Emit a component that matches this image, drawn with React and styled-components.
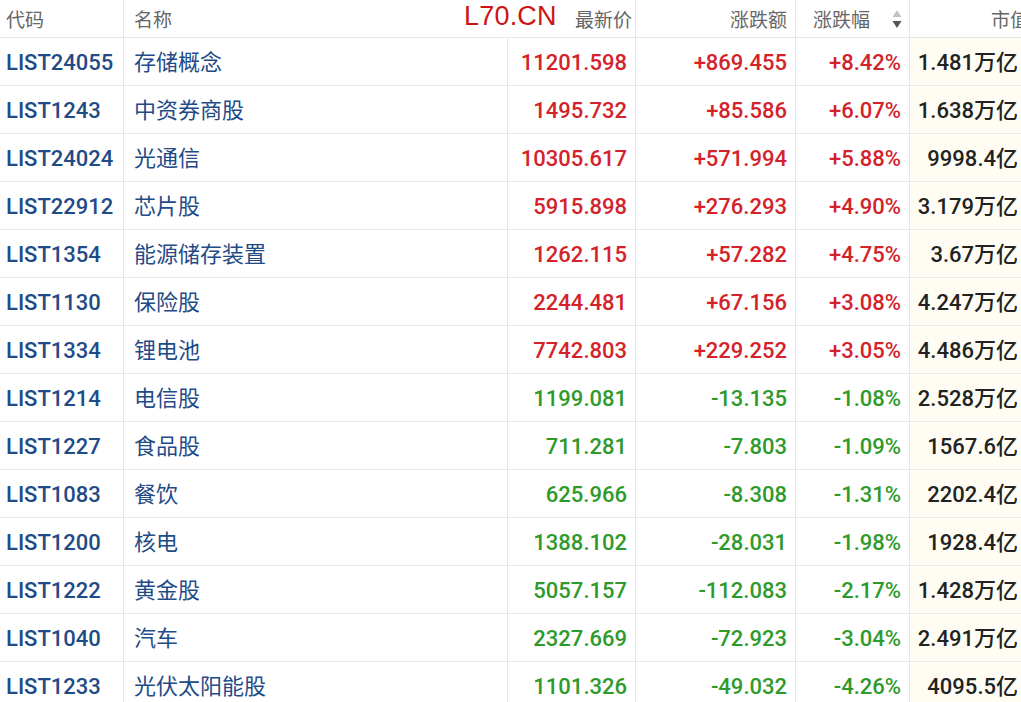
import React from 'react';
import styled, { createGlobalStyle } from 'styled-components';

const rows = [
  ['LIST24055', '存储概念', '11201.598', '+869.455', '+8.42%', '1.481万亿'],
  ['LIST1243', '中资券商股', '1495.732', '+85.586', '+6.07%', '1.638万亿'],
  ['LIST24024', '光通信', '10305.617', '+571.994', '+5.88%', '9998.4亿'],
  ['LIST22912', '芯片股', '5915.898', '+276.293', '+4.90%', '3.179万亿'],
  ['LIST1354', '能源储存装置', '1262.115', '+57.282', '+4.75%', '3.67万亿'],
  ['LIST1130', '保险股', '2244.481', '+67.156', '+3.08%', '4.247万亿'],
  ['LIST1334', '锂电池', '7742.803', '+229.252', '+3.05%', '4.486万亿'],
  ['LIST1214', '电信股', '1199.081', '-13.135', '-1.08%', '2.528万亿'],
  ['LIST1227', '食品股', '711.281', '-7.803', '-1.09%', '1567.6亿'],
  ['LIST1083', '餐饮', '625.966', '-8.308', '-1.31%', '2202.4亿'],
  ['LIST1200', '核电', '1388.102', '-28.031', '-1.98%', '1928.4亿'],
  ['LIST1222', '黄金股', '5057.157', '-112.083', '-2.17%', '1.428万亿'],
  ['LIST1040', '汽车', '2327.669', '-72.923', '-3.04%', '2.491万亿'],
  ['LIST1233', '光伏太阳能股', '1101.326', '-49.032', '-4.26%', '4095.5亿'],
];

const GlobalStyle = createGlobalStyle`
  html, body {
    margin: 0;
    padding: 0;
    background: #fff;
    overflow: hidden;
  }
  body {
    font-family: Roboto, "Noto Sans CJK SC", sans-serif;
  }
  * {
    box-sizing: border-box;
  }
`;

const Page = styled.div`
  position: relative;
  width: 1021px;
  height: 702px;
  overflow: hidden;
`;

const Table = styled.div`
  display: grid;
  grid-template-columns: 124px 384px 128px 160px 114px 120px;
  width: 1030px;
`;

const HeadCell = styled.div`
  height: 38px;
  display: flex;
  align-items: center;
  justify-content: ${p => (p.$left ? 'flex-start' : 'flex-end')};
  gap: 22px;
  padding: ${p => p.$pad || '0 8px'};
  font-family: "Noto Sans CJK SC", sans-serif;
  font-size: 19px;
  color: #666;
  border-bottom: 1px solid #e6e6e6;
  border-right: 1px solid ${p => (p.$noLine ? 'transparent' : '#e6e6e6')};
  white-space: nowrap;
`;

const Cell = styled.div`
  height: 48px;
  display: flex;
  align-items: center;
  justify-content: ${p => (p.$left ? 'flex-start' : 'flex-end')};
  padding: ${p => p.$pad || '2px 8px 0'};
  font-family: ${p => (p.$cjk ? '"Noto Sans CJK SC", sans-serif' : 'Roboto, "Noto Sans CJK SC", sans-serif')};
  font-size: 22px;
  font-weight: ${p => (p.$cjk ? 400 : 500)};
  line-height: 1;
  color: ${p => p.$color};
  background: ${p => p.$bg || '#fff'};
  border-bottom: 1px solid #e8e8e8;
  border-right: 1px solid #e6e6e6;
  white-space: nowrap;
`;

const Watermark = styled.div`
  position: absolute;
  left: 464px;
  top: 1px;
  font-family: "Liberation Sans", Arial, sans-serif;
  font-size: 27px;
  color: #cc1414;
  letter-spacing: 0.2px;
`;

const SortIcon = () => (
  <svg width="10" height="20" viewBox="0 0 10 20">
    <path d="M5 1 L9.5 8 L0.5 8 Z" fill="#c4c4c4" />
    <path d="M0.5 12 L9.5 12 L5 19 Z" fill="#555" />
  </svg>
);

const BLUE = '#1f4b87';
const RED = '#d3222a';
const GREEN = '#2f9a2c';

export default function App() {
  return (
    <Page>
      <GlobalStyle />
      <Table>
        <HeadCell $left $pad="0 6px">代码</HeadCell>
        <HeadCell $left $noLine $pad="0 10px">名称</HeadCell>
        <HeadCell $pad="0 3px">最新价</HeadCell>
        <HeadCell>涨跌额</HeadCell>
        <HeadCell $left $pad="0 6px 0 17px">
          涨跌幅
          <SortIcon />
        </HeadCell>
        <HeadCell $pad="0 0 0 0">市值</HeadCell>
        {rows.map(r => {
          const color = r[3].startsWith('+') ? RED : GREEN;
          return (
            <React.Fragment key={r[0]}>
              <Cell $left $color={BLUE} $pad="2px 6px 0">{r[0]}</Cell>
              <Cell $left $cjk $color={BLUE} $pad="0 10px 4px">{r[1]}</Cell>
              <Cell $color={color}>{r[2]}</Cell>
              <Cell $color={color}>{r[3]}</Cell>
              <Cell $color={color}>{r[4]}</Cell>
              <Cell $color="#222" $bg="#fffdf3" $pad="2px 11px 0 0">{r[5]}</Cell>
            </React.Fragment>
          );
        })}
      </Table>
      <Watermark>L70.CN</Watermark>
    </Page>
  );
}
